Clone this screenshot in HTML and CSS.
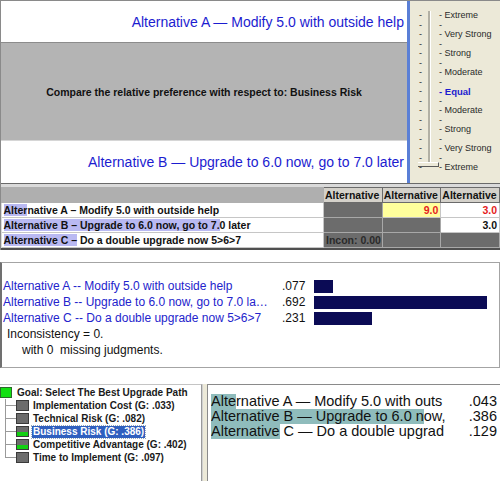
FILE: index.html
```html
<!DOCTYPE html>
<html lang="en">
  <head>
    <meta charset="UTF-8" />
    <meta name="viewport" content="width=device-width, initial-scale=1.0" />
    <title>Pairwise Comparison</title>
    <link rel="stylesheet" href="styles.css">
  </head>
  <body>
    <!-- Verbal comparison with the matrix below it -->
    <div class="pairwise">
      <div class="compare">
        <div class="compare-main">
          <div class="alt-box alt-top">Alternative A &mdash; Modify 5.0 with outside help</div>
          <div class="question">Compare the relative preference with respect to: Business Risk</div>
          <div class="alt-box alt-bottom">Alternative B &mdash; Upgrade to 6.0 now, go to 7.0 later</div>
        </div>
        <div class="scale">
          <div class="ticks">
            <span>-</span><span>-</span><span>-</span><span>-</span><span>-</span><span>-</span>
            <span>-</span><span>-</span><span>-</span><span>-</span><span>-</span><span>-</span>
            <span>-</span><span>-</span><span>-</span><span>-</span><span>-</span>
          </div>
          <div class="track"></div>
          <div class="labels">
            <span>- Extreme</span>
            <span>-</span>
            <span>- Very Strong</span>
            <span>-</span>
            <span>- Strong</span>
            <span>-</span>
            <span>- Moderate</span>
            <span>-</span>
            <span class="equal">- Equal</span>
            <span>-</span>
            <span>- Moderate</span>
            <span>-</span>
            <span>- Strong</span>
            <span>-</span>
            <span>- Very Strong</span>
            <span>-</span>
            <span>- Extreme</span>
          </div>
          <div class="thumb"></div>
        </div>
      </div>

      <div class="matrix-wrap">
        <table class="matrix">
          <tr>
            <th class="corner"></th>
            <th>Alternative</th>
            <th>Alternative</th>
            <th>Alternative</th>
          </tr>
          <tr>
            <td class="name"><span class="hl">Alter</span>native A &ndash; Modify 5.0 with outside help</td>
            <td class="dark"></td>
            <td class="yellow red">9.0</td>
            <td class="red">3.0</td>
          </tr>
          <tr>
            <td class="name"><span class="hl">Alternative B &ndash; Upgrade to 6.0 now, go to 7.</span>0 later</td>
            <td class="dark"></td>
            <td class="dark"></td>
            <td>3.0</td>
          </tr>
          <tr>
            <td class="name"><span class="hl">Alternative C &ndash;</span> Do a double upgrade now 5&gt;6&gt;7</td>
            <td class="dark incon">Incon: 0.00</td>
            <td class="dark"></td>
            <td class="dark"></td>
          </tr>
        </table>
      </div>
    </div>

    <!-- Priorities derived from the comparisons -->
    <div class="priorities">
      <div class="prio-row">
        <span class="prio-name">Alternative A -- Modify 5.0 with outside help</span>
        <span class="prio-value">.077</span>
        <span class="prio-bar"><i style="width: 19px"></i></span>
      </div>
      <div class="prio-row">
        <span class="prio-name">Alternative B -- Upgrade to 6.0 now, go to 7.0 later</span>
        <span class="prio-value">.692</span>
        <span class="prio-bar"><i style="width: 173px"></i></span>
      </div>
      <div class="prio-row">
        <span class="prio-name">Alternative C -- Do a double upgrade now 5&gt;6&gt;7</span>
        <span class="prio-value">.231</span>
        <span class="prio-bar"><i style="width: 58px"></i></span>
      </div>
      <div class="incon-line">Inconsistency = 0.</div>
      <div class="missing-line">with 0&nbsp; missing judgments.</div>
    </div>

    <!-- Model tree and synthesized results -->
    <div class="model">
      <div class="tree">
        <div class="goal">
          <span class="icon goal-icon"></span>
          <span>Goal: Select The Best Upgrade Path</span>
        </div>
        <div class="children">
          <div class="child">
            <span class="branch"></span>
            <span class="icon"></span>
            <span class="node-text">Implementation Cost (G: .033)</span>
          </div>
          <div class="child">
            <span class="branch"></span>
            <span class="icon"></span>
            <span class="node-text">Technical Risk (G: .082)</span>
          </div>
          <div class="child">
            <span class="branch"></span>
            <span class="icon judged"></span>
            <span class="node-text selected">Business Risk (G: .386)</span>
          </div>
          <div class="child">
            <span class="branch"></span>
            <span class="icon judged"></span>
            <span class="node-text">Competitive Advantage (G: .402)</span>
          </div>
          <div class="child last">
            <span class="branch"></span>
            <span class="icon"></span>
            <span class="node-text">Time to Implement (G: .097)</span>
          </div>
        </div>
      </div>
      <div class="results">
        <div class="results-inner">
          <div class="res-row">
            <span class="res-name"><span class="hl2">Alte</span>rnative A &mdash; Modify 5.0 with outs</span>
            <span class="res-value">.043</span>
          </div>
          <div class="res-row">
            <span class="res-name"><span class="hl2">Alternative B &mdash; Upgrade to 6.0 n</span>ow,</span>
            <span class="res-value">.386</span>
          </div>
          <div class="res-row">
            <span class="res-name"><span class="hl2">Alternative</span> C &mdash; Do a double upgrad</span>
            <span class="res-value">.129</span>
          </div>
        </div>
      </div>
    </div>
  </body>
</html>
```

FILE: styles.css
```css
*,
*::before,
*::after {
  box-sizing: border-box;
}

body {
  margin: 0;
  width: 500px;
  height: 481px;
  overflow: hidden;
  background-color: #fff;
  font-family: "Liberation Sans", Arial, sans-serif;
}

/* Top: verbal comparison */

.pairwise {
  border-top: 1px solid #8a8a8a;
  border-left: 1px solid #8a8a8a;
}

.compare {
  display: flex;
  height: 183px;
  border-bottom: 1px solid #6a6a6a;
}

.compare-main {
  width: 409px;
  display: flex;
  flex-direction: column;
  border-right: 3px solid #5a7fd6;
}

.alt-box {
  height: 42px;
  background-color: #fff;
  color: #1c1cd0;
  font-size: 14px;
  display: flex;
  align-items: center;
  justify-content: flex-end;
  padding-right: 3px;
}

.alt-top {
  border-bottom: 1px solid #8c8c8c;
}

.question {
  flex: 1;
  background-color: #b4b4b4;
  display: flex;
  align-items: center;
  justify-content: center;
  font-size: 10.5px;
  font-weight: bold;
  color: #111;
  border-bottom: 1px solid #d6d6d6;
}

.scale {
  flex: 1;
  display: flex;
  position: relative;
  background-color: #ece9d8;
  padding: 10px 0 0 9px;
  font-size: 9px;
  color: #2a2a2a;
}

.ticks,
.labels {
  display: flex;
  flex-direction: column;
}

.ticks span,
.labels span {
  height: 9.5px;
  line-height: 9.5px;
  white-space: nowrap;
}

.ticks {
  width: 9px;
}

.track {
  width: 3px;
  height: 155px;
  background-color: #b2b0a4;
  border-right: 1px solid #fff;
}

.labels {
  padding-left: 8px;
}

.labels .equal {
  color: #1c1cd0;
  font-weight: bold;
  font-size: 9.5px;
}

.thumb {
  position: absolute;
  left: 8px;
  top: 161px;
  width: 21px;
  height: 5px;
  border-bottom: 1px solid #5a5a5a;
  border-right: 1px solid #5a5a5a;
  border-top: 1px solid #fff;
  background-color: #ece9d8;
}

/* Comparison matrix */

.matrix-wrap {
  background-color: #dadada;
  padding-top: 3px;
  border-bottom: 2px solid #505050;
}

.matrix {
  border-collapse: collapse;
  width: 100%;
  table-layout: fixed;
  font-size: 10.5px;
  font-weight: bold;
  color: #111;
}

.matrix th,
.matrix td {
  height: 15px;
  padding: 0 2px;
  white-space: nowrap;
  overflow: hidden;
  border: 1px solid #c6c6c6;
}

.matrix th {
  background-color: #d4d1ca;
  border-color: #6a6a6a;
  font-size: 10.5px;
  text-align: left;
  padding: 0 1px;
}

.matrix th.corner {
  width: 322px;
  background-color: #afafaf;
  border-color: #afafaf;
}

.matrix td {
  background-color: #fff;
  text-align: right;
}

.matrix td.name {
  text-align: left;
  padding-left: 2px;
  border-left: none;
}

.matrix .hl {
  background-color: #b9b9f2;
}

.matrix td.dark {
  background-color: #6c6c6c;
  border-color: #a8a8a8;
}

.matrix td.yellow {
  background-color: #ffff9c;
}

.matrix td.red {
  color: #e41c1c;
}

.matrix td.incon {
  text-align: left;
  color: #2a2a2a;
}

/* Middle: priorities */

.priorities {
  margin-top: 12px;
  height: 106px;
  border: 1px solid #a4a4a4;
  border-left: 2px solid #707070;
  padding: 15px 0 0 1px;
  font-size: 12px;
  line-height: 16px;
}

.prio-row {
  display: grid;
  grid-template-columns: 279px 32px 1fr;
  align-items: center;
  color: #2323cc;
}

.prio-name {
  width: 266px;
  overflow: hidden;
  white-space: nowrap;
  text-overflow: ellipsis;
}

.prio-value {
  color: #111;
}

.prio-bar {
  display: flex;
}

.prio-bar i {
  display: block;
  height: 13px;
  background-color: #0b0b55;
}

.incon-line {
  padding-left: 4px;
  color: #111;
}

.missing-line {
  padding-left: 19px;
  color: #111;
}

/* Bottom: tree and results */

.model {
  margin-top: 16px;
  display: flex;
  height: 97px;
}

.tree {
  width: 202px;
  border-top: 1px solid #c4c4c4;
  border-right: 1px solid #9a9a9a;
  padding-top: 1px;
  font-size: 10px;
  font-weight: bold;
  color: #1a1a1a;
}

.goal {
  display: flex;
  align-items: center;
  gap: 5px;
  height: 13px;
}

.icon {
  width: 13px;
  height: 11px;
  background-color: #6c6c6c;
  border: 1px solid #3a3a3a;
}

.icon.goal-icon {
  width: 12px;
  height: 11px;
  background-color: #12e012;
  border-color: #2a6a2a;
}

.icon.judged {
  background: linear-gradient(#6c6c6c 55%, #12d012 55%);
}

.children {
  padding-left: 5px;
}

.child {
  display: flex;
  align-items: center;
  height: 13px;
}

.branch {
  width: 11px;
  align-self: stretch;
  background:
    linear-gradient(#9a9a9a, #9a9a9a) 0 0 / 1px 100% no-repeat,
    linear-gradient(#9a9a9a, #9a9a9a) 0 50% / 100% 1px no-repeat;
}

.child.last .branch {
  background:
    linear-gradient(#9a9a9a, #9a9a9a) 0 0 / 1px 50% no-repeat,
    linear-gradient(#9a9a9a, #9a9a9a) 0 50% / 100% 1px no-repeat;
}

.node-text {
  margin-left: 3px;
  padding: 0 1px;
  line-height: 12px;
  white-space: nowrap;
}

.node-text.selected {
  background-color: #2f5fbf;
  color: #fff;
  outline: 1px dotted #9ab;
}

.results {
  flex: 1;
  background-color: #ece9d8;
  border-left: 1px solid #d0d0d0;
  padding-left: 4px;
}

.results-inner {
  height: 100%;
  background-color: #fff;
  border-top: 1px solid #8a8a8a;
  border-left: 1px solid #8a8a8a;
  padding: 9px 3px 0 3px;
  font-size: 14.5px;
  color: #111;
}

.res-row {
  display: flex;
  height: 15px;
  line-height: 15px;
}

.res-name {
  flex: none;
  width: 234px;
  overflow: hidden;
  white-space: nowrap;
}

.res-value {
  flex: 1;
  text-align: right;
}

.hl2 {
  background-color: #8fbcbc;
}
```
